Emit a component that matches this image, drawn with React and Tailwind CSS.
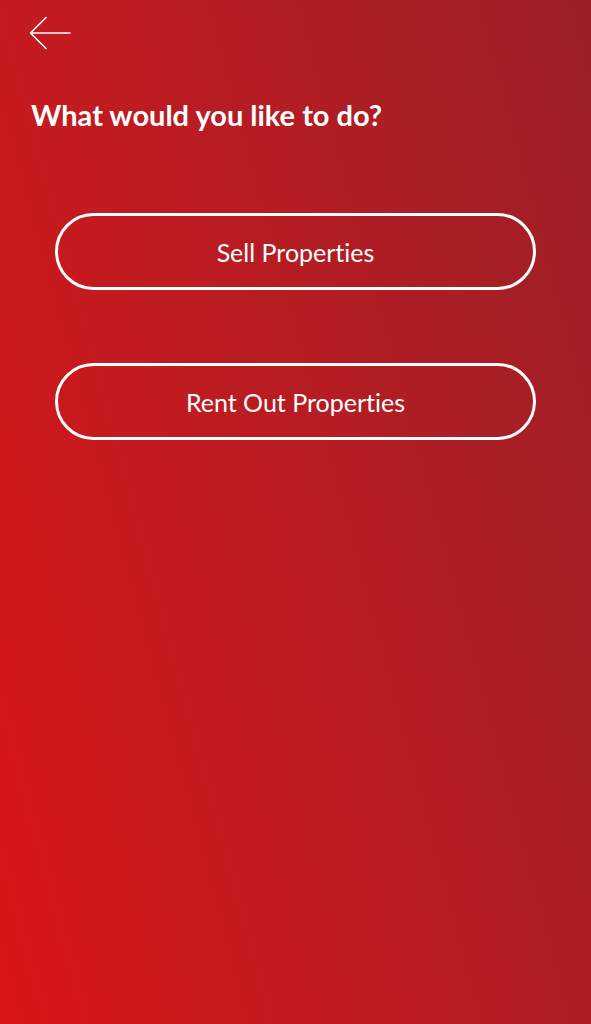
export default function App() {
  return (
    <div className="min-h-[1024px] w-full bg-linear-75 from-[#d91417] to-[#9b1f27] font-['Lato',sans-serif] text-white [font-variant-ligatures:none]">
      <div className="px-[29px] pt-[16px]">
        <svg width="42" height="34" viewBox="0 0 42 34" fill="none" stroke="white" strokeWidth="1.6" strokeLinecap="round" strokeLinejoin="round">
          <path d="M41 17H1.5M17 1.5L1.5 17L17 32.5" />
        </svg>
      </div>
      <h1 className="mt-[47px] px-[31px] text-[29px] font-bold leading-[36px]">What would you like to do?</h1>
      <div className="mt-[80px] flex flex-col gap-[73px] px-[55px]">
        <button className="h-[77px] w-full rounded-full border-[3px] border-white pt-[2px] text-[25px] text-white">Sell Properties</button>
        <button className="h-[77px] w-full rounded-full border-[3px] border-white pt-[2px] text-[25px] text-white">Rent Out Properties</button>
      </div>
    </div>
  )
}
